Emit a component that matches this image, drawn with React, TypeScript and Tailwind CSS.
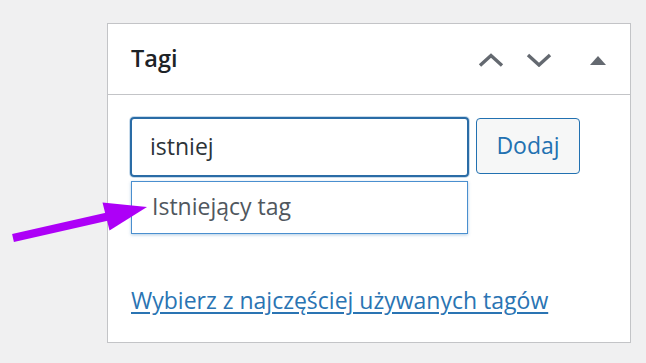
import React from "react";

export default function App() {
  return (
    <div
      className="relative min-h-[363px] w-[646px] overflow-hidden bg-[#f0f0f1] pl-[107px] pt-[23px]"
      style={{ fontFamily: '"Open Sans", "Noto Sans", "DejaVu Sans", sans-serif' }}
    >
      <div className="h-[320px] w-[524px] border border-[#c3c4c7] bg-white">
        <div className="flex h-[71px] items-center border-b border-[#c3c4c7] pl-[23px] pr-[24px]">
          <h2 className="text-[23.5px] font-semibold leading-none text-[#1d2327]">Tagi</h2>
          <div className="ml-auto flex items-center">
            <svg width="26" height="14" viewBox="0 0 26 14" className="mt-[2px]">
              <polyline points="2,12.5 13,2.5 24,12.5" fill="none" stroke="#646970" strokeWidth="3.4" />
            </svg>
            <svg width="26" height="14" viewBox="0 0 26 14" className="ml-[22px] mt-[2px]">
              <polyline points="2,2 13,12 24,2" fill="none" stroke="#646970" strokeWidth="3.4" />
            </svg>
            <svg width="16" height="9" viewBox="0 0 16 9" className="ml-[38px] mt-[2px]">
              <polygon points="8,0 16,9 0,9" fill="#646970" />
            </svg>
          </div>
        </div>
        <div className="pl-[22px] pt-[22px]">
          <div className="flex items-start">
            <div className="flex h-[60px] w-[339px] items-center rounded-[4px] border-2 border-[#2a6ca6] pl-[18px] pb-[2px] text-[23px] text-[#2c3338] shadow-[0_0_0_1px_rgba(34,113,177,0.25)]">
              istniej
            </div>
            <div className="ml-[7px] mt-[1px] flex h-[56px] w-[104px] items-center justify-center rounded-[4px] border border-[#2271b1] bg-[#f6f7f7] pb-[2px] text-[23px] text-[#2271b1]">
              Dodaj
            </div>
          </div>
          <div className="ml-[1px] mt-[4px] flex h-[53px] w-[337px] items-center border border-[#4a8fcf] pl-[20px] pb-[2px] text-[23px] text-[#50575e] shadow-[0_1px_3px_rgba(34,113,177,0.35)]">
            Istniejący tag
          </div>
          <div className="mt-[50px] pl-[1px]">
            <a href="#" className="text-[23px] leading-[32px] text-[#2a74b3] underline decoration-[1.5px] underline-offset-[3px]">
              Wybierz z najczęściej używanych tagów
            </a>
          </div>
        </div>
      </div>
      <svg className="absolute left-0 top-0" width="646" height="363" viewBox="0 0 646 363" style={{ pointerEvents: "none" }}>
        <line x1="13" y1="238" x2="110" y2="216" stroke="#ad00f7" strokeWidth="8" />
        <polygon points="102.5,202.5 147,207 109.5,230.5" fill="#ad00f7" />
      </svg>
    </div>
  );
}
